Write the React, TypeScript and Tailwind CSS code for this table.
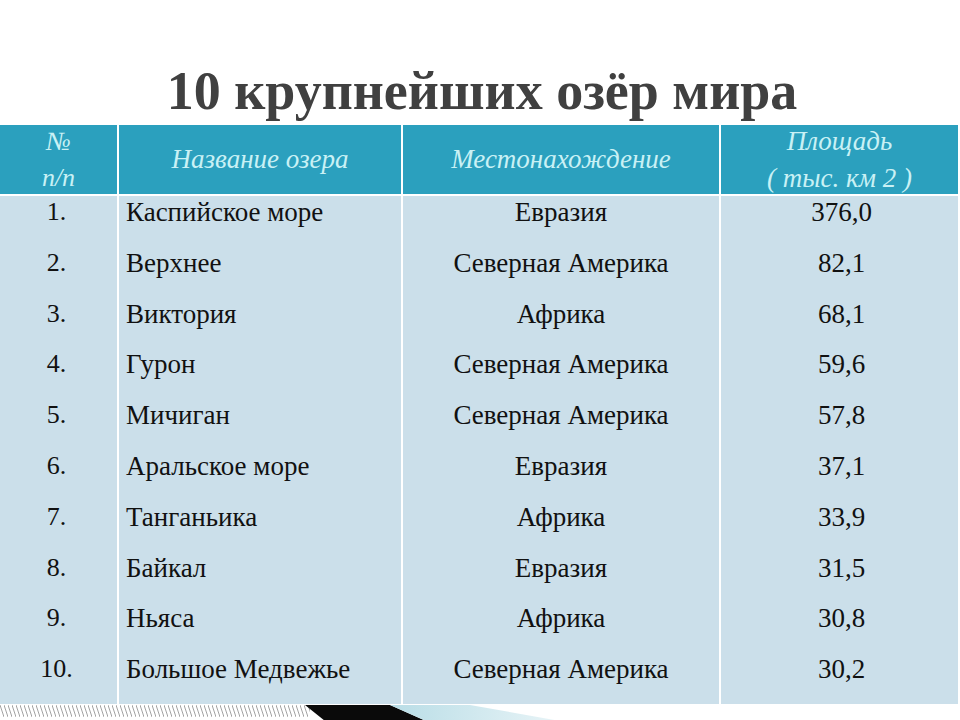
import React from "react";

const rows: [string, string, string, string][] = [
  ["1.", "Каспийское море", "Евразия", "376,0"],
  ["2.", "Верхнее", "Северная Америка", "82,1"],
  ["3.", "Виктория", "Африка", "68,1"],
  ["4.", "Гурон", "Северная Америка", "59,6"],
  ["5.", "Мичиган", "Северная Америка", "57,8"],
  ["6.", "Аральское море", "Евразия", "37,1"],
  ["7.", "Танганьика", "Африка", "33,9"],
  ["8.", "Байкал", "Евразия", "31,5"],
  ["9.", "Ньяса", "Африка", "30,8"],
  ["10.", "Большое Медвежье", "Северная Америка", "30,2"],
];

export default function App() {
  return (
    <div className="w-[960px] h-[720px] bg-white overflow-hidden font-['Liberation_Serif','Times_New_Roman',serif]">
      <div className="pt-[64px] h-[125px]">
        <h1 className="text-center text-[54px] leading-[54px] font-bold text-[#404040] pl-[4px]">
          10 крупнейших озёр мира
        </h1>
      </div>
      <div className="w-[958px] grid grid-cols-[117px_282px_316px_237px] gap-x-[2px] bg-white">
        <div className="h-[69px] bg-[#2ba0be] text-[#c9f1f5] italic text-[26px] leading-[36px] flex flex-col items-center justify-center">
          <span>№</span>
          <span>п/п</span>
        </div>
        <div className="h-[69px] bg-[#2ba0be] text-[#c9f1f5] italic text-[27px] flex items-center justify-center">
          Название озера
        </div>
        <div className="h-[69px] bg-[#2ba0be] text-[#c9f1f5] italic text-[27px] flex items-center justify-center">
          Местонахождение
        </div>
        <div className="h-[69px] bg-[#2ba0be] text-[#c9f1f5] italic text-[27px] leading-[37px] flex flex-col items-center justify-center">
          <span>Площадь</span>
          <span>( тыс. км 2 )</span>
        </div>
        <div className="col-span-4 h-[2px]" />
        {rows.map((r, i) => (
          <React.Fragment key={i}>
            <div className="h-[50.8px] bg-[#cbdfea] text-[26px] leading-[32px] text-[#111] text-center pr-[4px]">
              {r[0]}
            </div>
            <div className="h-[50.8px] bg-[#cbdfea] text-[27px] leading-[32px] text-[#111] pl-[7px]">
              {r[1]}
            </div>
            <div className="h-[50.8px] bg-[#cbdfea] text-[27px] leading-[32px] text-[#111] text-center">
              {r[2]}
            </div>
            <div className="h-[50.8px] bg-[#cbdfea] text-[27px] leading-[32px] text-[#111] text-center pl-[4px]">
              {r[3]}
            </div>
          </React.Fragment>
        ))}
      </div>
      <div className="h-[16px] mt-[1px]">
        <svg width="960" height="16" viewBox="0 0 960 16">
          <defs>
            <pattern id="hatch" width="4" height="16" patternUnits="userSpaceOnUse">
              <line x1="0" y1="0" x2="4" y2="12" stroke="#8a8a8a" strokeWidth="0.8" />
            </pattern>
            <linearGradient id="blue" x1="0" y1="0" x2="1" y2="0">
              <stop offset="0" stopColor="#b9dde6" />
              <stop offset="1" stopColor="#e8f4f7" />
            </linearGradient>
          </defs>
          <rect x="0" y="0" width="310" height="16" fill="url(#hatch)" />
          <polygon points="305,0 390,0 426,16 325,16" fill="#0a0a0a" />
          <polygon points="390,0 470,0 560,16 426,16" fill="url(#blue)" />
        </svg>
      </div>
    </div>
  );
}
